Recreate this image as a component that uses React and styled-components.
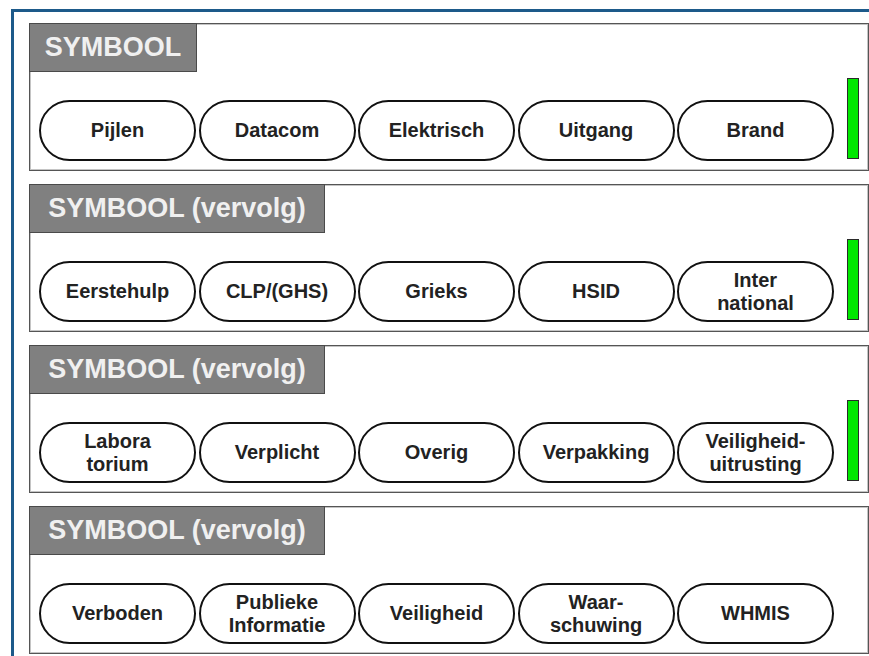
import React from "react";
import styled, { createGlobalStyle } from "styled-components";

const Global = createGlobalStyle`
  html, body { margin: 0; padding: 0; background: #ffffff; overflow: hidden; }
  body { font-family: "Liberation Sans", Arial, sans-serif; }
`;

const Frame = styled.div`
  margin: 9px 0 0 11px;
  width: 858px;
  height: 647px;
  border-top: 3px solid #1d5a8a;
  border-left: 3px solid #1d5a8a;
  background: #ffffff;
  padding: 11px 0 0 15px;
  box-sizing: border-box;
  display: flex;
  flex-direction: column;
  gap: 13px;
  overflow: hidden;
`;

const Panel = styled.section`
  flex: none;
  width: 840px;
  height: 148px;
  box-sizing: border-box;
  border: 1px solid #555555;
  box-shadow: inset 1px 1px 0 #c4c4c4, inset -1px -1px 0 #c4c4c4;
  display: flex;
  flex-direction: column;
  background: #ffffff;
`;

const Tab = styled.div`
  margin: -1px 0 0 -1px;
  width: ${(p) => p.$w}px;
  height: 49px;
  box-sizing: border-box;
  background: #808080;
  border: 1px solid #4a4a4a;
  color: #f0f0f0;
  font-family: "Liberation Sans", Arial, sans-serif;
  font-weight: bold;
  font-size: 27px;
  display: flex;
  align-items: center;
  justify-content: center;
  white-space: nowrap;
`;

const Row = styled.div`
  flex: 1;
  display: flex;
  align-items: flex-end;
  padding: 0 0 9px 9px;
  gap: 2.5px;
`;

const Pill = styled.div`
  width: 157px;
  height: 61px;
  box-sizing: border-box;
  border: 2.8px solid #111111;
  border-radius: 31px;
  display: flex;
  align-items: center;
  justify-content: center;
  text-align: center;
  font-family: "Liberation Sans", Arial, sans-serif;
  font-weight: bold;
  font-size: 20px;
  line-height: 23px;
  color: #222222;
`;

const Bar = styled.div`
  width: 12px;
  height: 81px;
  box-sizing: border-box;
  margin: 0 0 2px 10.5px;
  background: #00e800;
  border: 1px solid #2a2a2a;
`;

const panels = [
  { title: "SYMBOOL", w: 168, bar: true, items: [["Pijlen"], ["Datacom"], ["Elektrisch"], ["Uitgang"], ["Brand"]] },
  { title: "SYMBOOL (vervolg)", w: 296, bar: true, items: [["Eerstehulp"], ["CLP/(GHS)"], ["Grieks"], ["HSID"], ["Inter", "national"]] },
  { title: "SYMBOOL (vervolg)", w: 296, bar: true, items: [["Labora", "torium"], ["Verplicht"], ["Overig"], ["Verpakking"], ["Veiligheid-", "uitrusting"]] },
  { title: "SYMBOOL (vervolg)", w: 296, bar: false, items: [["Verboden"], ["Publieke", "Informatie"], ["Veiligheid"], ["Waar-", "schuwing"], ["WHMIS"]] },
];

export default function App() {
  return (
    <>
      <Global />
      <Frame>
        {panels.map((p, i) => (
          <Panel key={i}>
            <Tab $w={p.w}>{p.title}</Tab>
            <Row>
              {p.items.map((lines, j) => (
                <Pill key={j}>
                  <span>
                    {lines.map((l, k) => (
                      <React.Fragment key={k}>
                        {k > 0 && <br />}
                        {l}
                      </React.Fragment>
                    ))}
                  </span>
                </Pill>
              ))}
              {p.bar && <Bar />}
            </Row>
          </Panel>
        ))}
      </Frame>
    </>
  );
}
